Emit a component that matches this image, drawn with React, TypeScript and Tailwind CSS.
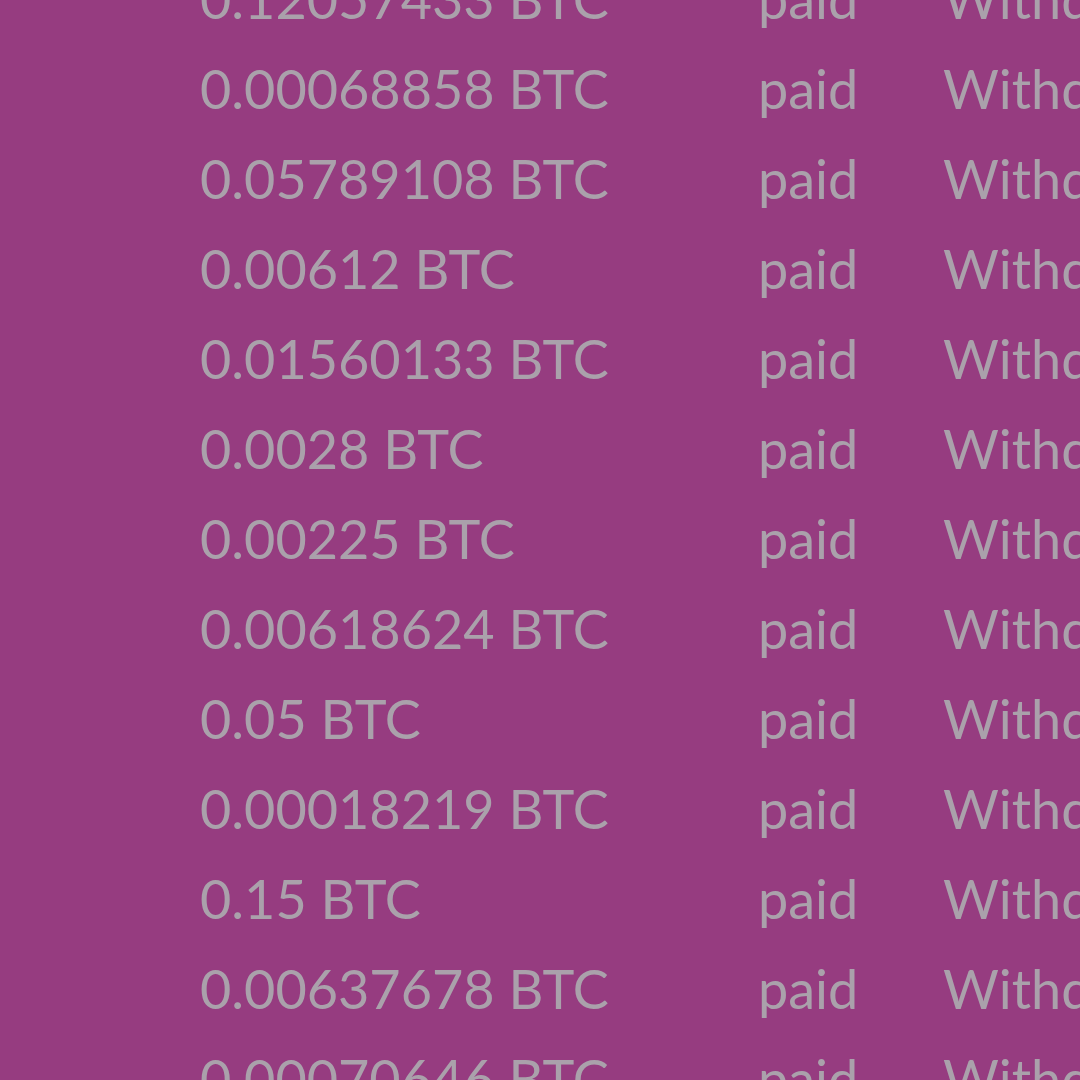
import React from "react";

const rows = [
  "0.12057433",
  "0.00068858",
  "0.05789108",
  "0.00612",
  "0.01560133",
  "0.0028",
  "0.00225",
  "0.00618624",
  "0.05",
  "0.00018219",
  "0.15",
  "0.00637678",
  "0.00070646",
];

const App = () => {
  return (
    <div className="h-[1080px] w-[1080px] overflow-hidden bg-[#963c80] font-['Lato',sans-serif] text-[54px] text-[#aaa1ab]">
      <div className="-mt-[46px] pl-[200px]">
        {rows.map((amount) => (
          <div key={amount} className="flex h-[90px] items-center whitespace-nowrap leading-[90px]">
            <span className="w-[558px] shrink-0">{amount} BTC</span>
            <span className="w-[185px] shrink-0">paid</span>
            <span className="shrink-0">Withdrawal</span>
          </div>
        ))}
      </div>
    </div>
  );
};

export default App;
